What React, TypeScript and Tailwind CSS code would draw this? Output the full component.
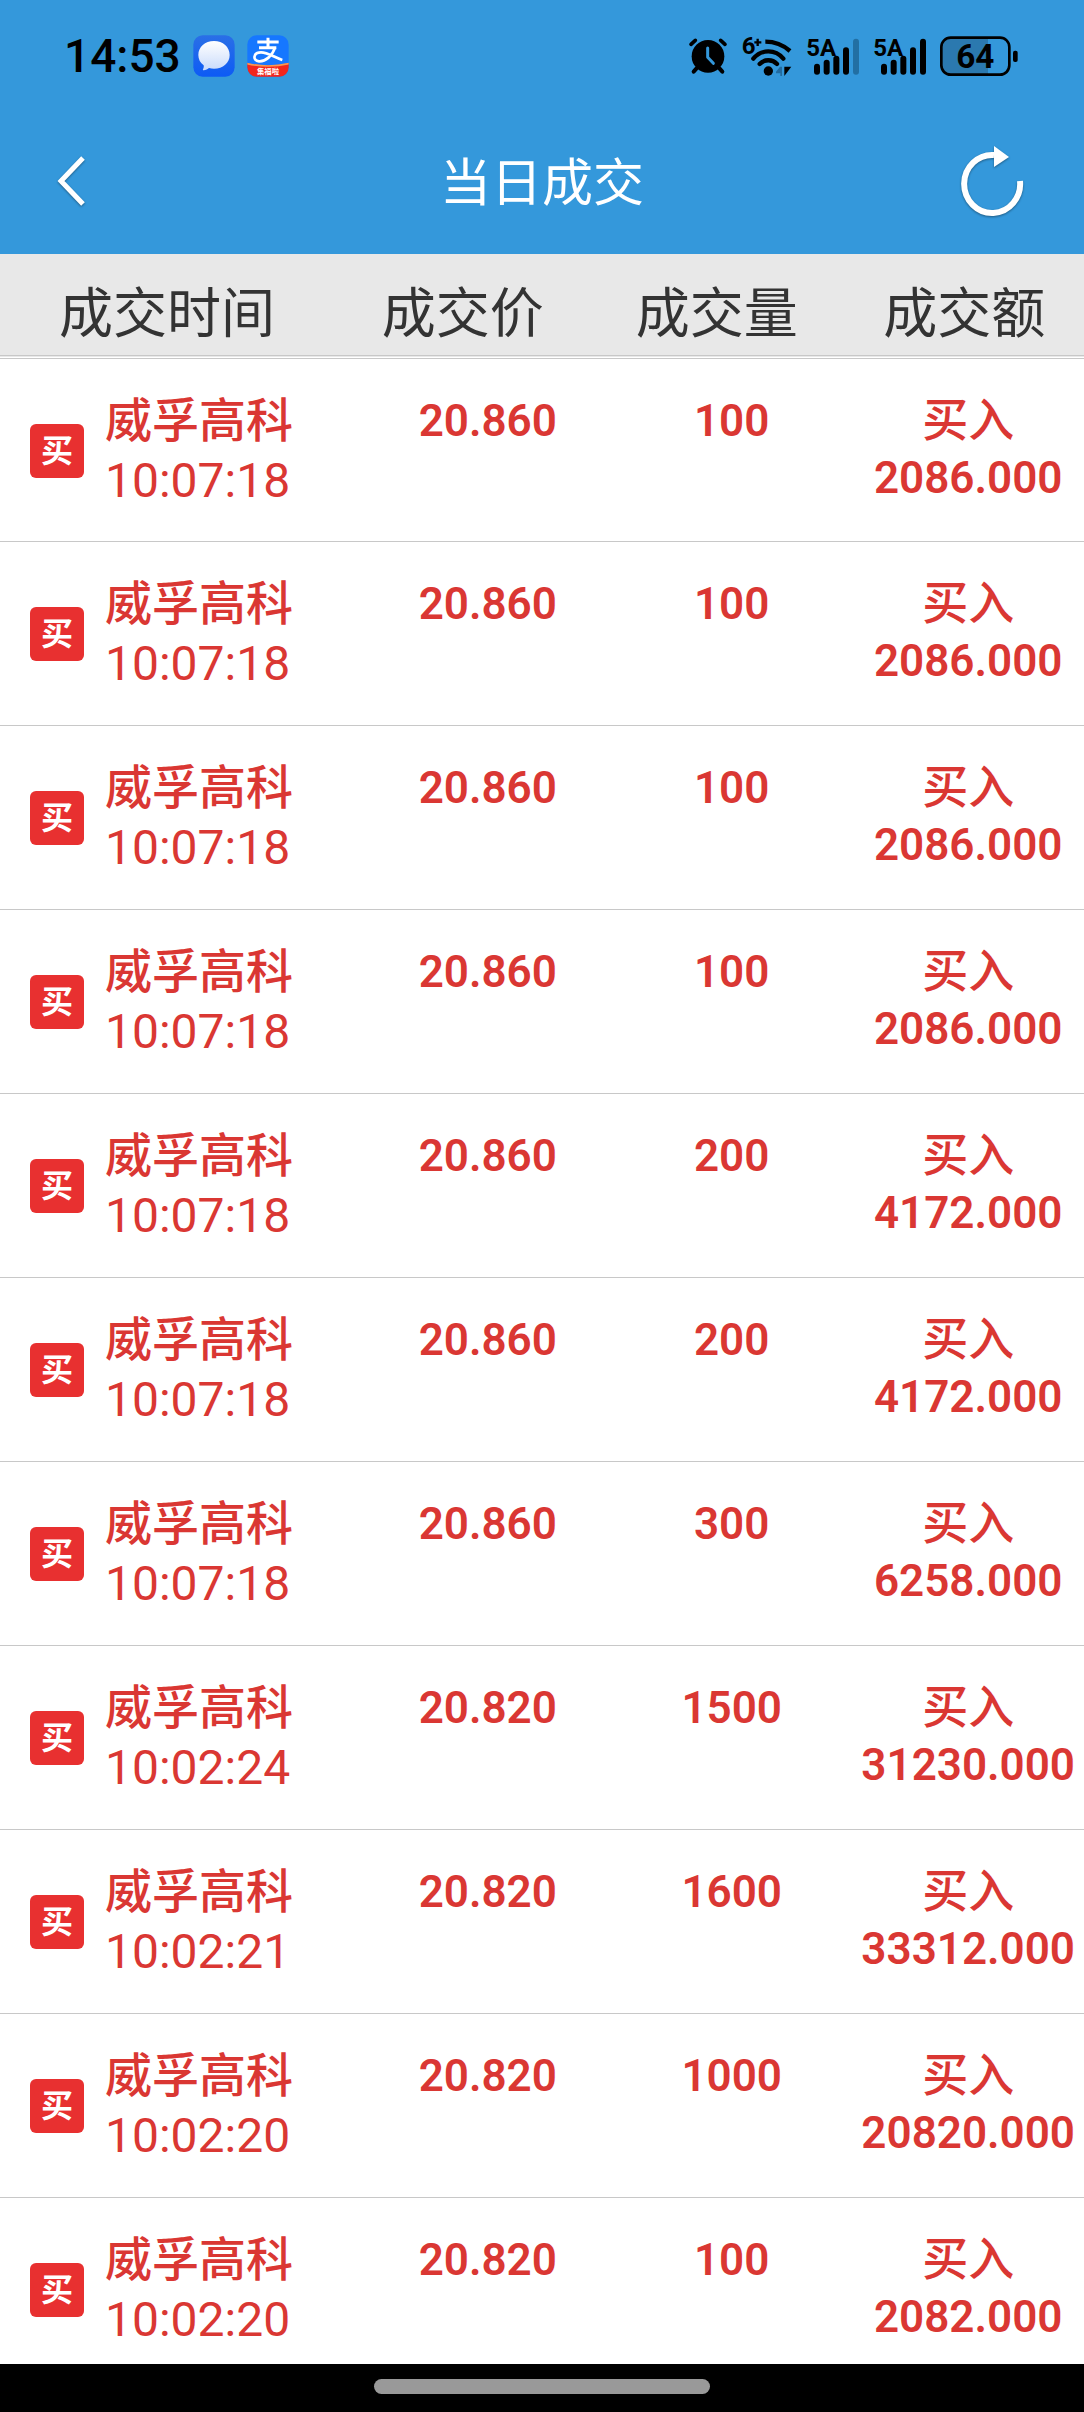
import React from 'react';

interface Trade {
    name: string;
    time: string;
    price: string;
    volume: string;
    amount: string;
}

const STOCK = '威孚高科';

const trades: Trade[] = [
    { name: STOCK, time: '10:07:18', price: '20.860', volume: '100', amount: '2086.000' },
    { name: STOCK, time: '10:07:18', price: '20.860', volume: '100', amount: '2086.000' },
    { name: STOCK, time: '10:07:18', price: '20.860', volume: '100', amount: '2086.000' },
    { name: STOCK, time: '10:07:18', price: '20.860', volume: '100', amount: '2086.000' },
    { name: STOCK, time: '10:07:18', price: '20.860', volume: '200', amount: '4172.000' },
    { name: STOCK, time: '10:07:18', price: '20.860', volume: '200', amount: '4172.000' },
    { name: STOCK, time: '10:07:18', price: '20.860', volume: '300', amount: '6258.000' },
    { name: STOCK, time: '10:02:24', price: '20.820', volume: '1500', amount: '31230.000' },
    { name: STOCK, time: '10:02:21', price: '20.820', volume: '1600', amount: '33312.000' },
    { name: STOCK, time: '10:02:20', price: '20.820', volume: '1000', amount: '20820.000' },
    { name: STOCK, time: '10:02:20', price: '20.820', volume: '100', amount: '2082.000' },
];

const NARROW = '"Liberation Sans Narrow", Roboto, sans-serif';

function MessageIcon() {
    return (
        <svg width="42" height="42" viewBox="0 0 126 126">
            <defs>
                <linearGradient id="msgBg" x1="0" y1="0" x2="0" y2="1">
                    <stop offset="0" stopColor="#2a6fe6" />
                    <stop offset="1" stopColor="#0d5bf5" />
                </linearGradient>
                <linearGradient id="msgBubble" x1="0" y1="0" x2="0" y2="1">
                    <stop offset="0" stopColor="#ffffff" />
                    <stop offset="1" stopColor="#c9dbfb" />
                </linearGradient>
            </defs>
            <rect x="1" y="1" width="124" height="124" rx="28" fill="url(#msgBg)" />
            <path
                d="M63 18c27 0 47 18 47 42s-20 41-47 41c-5 0-10-1-15-2-4 3-9 6-16 7-2 0-3-1-2-3 2-4 3-8 2-12C22 84 16 73 16 60c0-24 20-42 47-42z"
                fill="url(#msgBubble)"
            />
        </svg>
    );
}

function PayIcon() {
    return (
        <svg width="42" height="42" viewBox="0 0 126 126">
            <defs>
                <clipPath id="payClip">
                    <rect x="1" y="1" width="124" height="124" rx="28" />
                </clipPath>
            </defs>
            <g clipPath="url(#payClip)">
                <rect width="126" height="126" fill="#1677ff" />
                <path d="M0 84q63 14 126 0v42H0z" fill="#f3261c" />
                <path d="M0 86q63 14 126 0" fill="none" stroke="#f79a52" strokeWidth="5" />
            </g>
            <g fill="none" stroke="#fff" strokeWidth="9">
                <path d="M31 21h64M63 8v29M36 38h52" />
                <path d="M84 38C76 62 56 80 36 79c-20-2-18-27 6-27 20 0 42 16 64 23" strokeWidth="8" />
            </g>
            <text x="63" y="118" textAnchor="middle" fontSize="22" fontWeight="700" fill="#fff" fontFamily='"Noto Sans CJK SC", sans-serif'>
                集福啦
            </text>
        </svg>
    );
}

function AlarmIcon() {
    return (
        <svg width="40" height="38" viewBox="0 0 120 114" fill="none" stroke="#000" strokeLinecap="round">
            <path d="M9 22 22 10M98 10l13 12" strokeWidth="11" />
            <path d="M25 95 17 104M95 95l8 9" strokeWidth="12" />
            <circle cx="60" cy="58" r="49" fill="#000" stroke="none" />
            <path d="M59 33v28l17 18" stroke="#3498db" strokeWidth="9" strokeLinejoin="round" />
        </svg>
    );
}

function WifiIcon() {
    return (
        <svg width="52" height="52" viewBox="0 -12 156 156">
            <g fill="none" stroke="#000" strokeWidth="13">
                <path d="M73 23q42 0 74 28" />
                <path d="M37 74c24-29 66-29 90 0" strokeLinecap="round" />
                <path d="M56 90c14-15 38-15 52 0" strokeLinecap="round" />
            </g>
            <circle cx="82" cy="111" r="14" />
            <path d="M123 98v28h-5v-8h-13v-5l12-15z" fill="#226ba0" />
            <path d="M130 98v28l21-28z" />
            <path d="M40 25h21M50 14v22" stroke="#000" strokeWidth="7" />
            <text x="2" y="61" fontSize="72" fontWeight="700" fontFamily={NARROW}>
                6
            </text>
        </svg>
    );
}

function SignalIcon({ level }: { level: number }) {
    const bars = [
        { x: 24, y: 89 },
        { x: 53, y: 77 },
        { x: 82, y: 65 },
        { x: 111, y: 40 },
        { x: 141, y: 14 },
    ];
    return (
        <svg width="54" height="45" viewBox="0 0 162 135">
            {bars.map((bar, i) => (
                <rect key={bar.x} x={bar.x} y={bar.y} width="18" height={122 - bar.y} rx="9" fill={i < level ? '#000' : '#226fa3'} />
            ))}
            <text x="1" y="67" fontSize="72" fontWeight="700" fontFamily={NARROW}>
                5A
            </text>
        </svg>
    );
}

function BatteryIcon() {
    return (
        <svg width="78" height="40" viewBox="0 0 234 120">
            <path d="M32 6h112v108H32C14 114 5 105 5 88V32C5 15 14 6 32 6z" fill="#2b79af" />
            <rect x="4" y="5" width="204" height="111" rx="28" fill="none" stroke="#000" strokeWidth="8" />
            <rect x="219" y="44" width="14" height="34" rx="6" />
            <text x="106" y="97" textAnchor="middle" fontSize="100" fontWeight="700" fontFamily="Roboto, sans-serif">
                64
            </text>
        </svg>
    );
}

function StatusBar() {
    return (
        <div className="flex h-[112px] items-center justify-between pr-[66px] pl-16">
            <div className="flex items-center gap-3">
                <span className="text-[46px] leading-none font-medium text-black">14:53</span>
                <MessageIcon />
                <PayIcon />
            </div>
            <div className="flex items-center gap-[13px]">
                <AlarmIcon />
                <WifiIcon />
                <SignalIcon level={4} />
                <SignalIcon level={5} />
                <BatteryIcon />
            </div>
        </div>
    );
}

function TitleBar() {
    return (
        <div className="grid h-[142px] grid-cols-[1fr_auto_1fr] items-center px-14">
            <button type="button" aria-label="返回" className="justify-self-start pb-1">
                <svg width="36" height="54" viewBox="0 0 36 54" fill="none" className="drop-shadow-[0_1px_1px_rgba(0,0,0,0.4)]">
                    <path d="M27 4 5 27l22 23" stroke="#fff" strokeWidth="5" />
                </svg>
            </button>
            <h1 className="text-[51px] leading-none text-white">当日成交</h1>
            <button type="button" aria-label="刷新" className="justify-self-end pb-1">
                <svg width="72" height="76" viewBox="0 0 72 76" fill="none" className="drop-shadow-[0_1px_1px_rgba(0,0,0,0.4)]">
                    <path d="M38 12a28 29 0 1 0 26 26" stroke="#fff" strokeWidth="6" />
                    <path d="M38 3 53 14 38 24z" fill="#fff" />
                </svg>
            </button>
        </div>
    );
}

function TradeRow({ trade }: { trade: Trade }) {
    return (
        <tr className="h-[184px] border-b border-[#c8c8c8] align-top">
            <td className="pt-8 pl-[30px]">
                <div className="flex items-center gap-[21px]">
                    <span className="flex size-[54px] shrink-0 items-center justify-center rounded-md bg-[#e83030] text-[32px] leading-none font-bold text-white">
                        买
                    </span>
                    <div className="leading-[60px]">
                        <div className="text-[47px] font-medium">{trade.name}</div>
                        <div className="text-[48px]">{trade.time}</div>
                    </div>
                </div>
            </td>
            <td className="pt-8 text-center text-[44px] leading-[60px] font-semibold">{trade.price}</td>
            <td className="pt-8 text-center text-[44px] leading-[60px] font-semibold">{trade.volume}</td>
            <td className="pt-8 pr-1 text-center leading-[58px]">
                <div className="text-[46px] font-medium">买入</div>
                <div className="text-[44px] font-semibold">{trade.amount}</div>
            </td>
        </tr>
    );
}

export default function App() {
    return (
        <div className="flex h-screen flex-col bg-white font-[Roboto,'Noto_Sans_CJK_SC',sans-serif]">
            <header className="shrink-0 bg-[#3498db]">
                <StatusBar />
                <TitleBar />
            </header>

            <main className="min-h-0 flex-1 overflow-y-auto [scrollbar-width:none]">
                <table className="w-full table-fixed border-collapse text-[#da3733]">
                    <thead className="border-b-4 border-double border-[#c8c8c8] bg-[#e8e8e8] text-[54px] text-[#333]">
                        <tr className="h-[103px]">
                            <th className="w-[34%] pt-5 pl-[59px] text-left leading-[72px] font-normal">成交时间</th>
                            <th className="w-[22%] pt-5 pr-[50px] leading-[72px] font-normal">成交价</th>
                            <th className="w-[23%] pt-5 pr-[30px] leading-[72px] font-normal">成交量</th>
                            <th className="w-[21%] pt-5 pr-3 leading-[72px] font-normal">成交额</th>
                        </tr>
                    </thead>
                    <tbody>
                        {trades.map((trade, i) => (
                            <TradeRow key={i} trade={trade} />
                        ))}
                    </tbody>
                </table>
            </main>

            <footer className="flex h-12 shrink-0 items-start justify-center bg-black pt-[15px]">
                <div className="h-[15px] w-[31%] rounded-full bg-[#999]" />
            </footer>
        </div>
    );
}
